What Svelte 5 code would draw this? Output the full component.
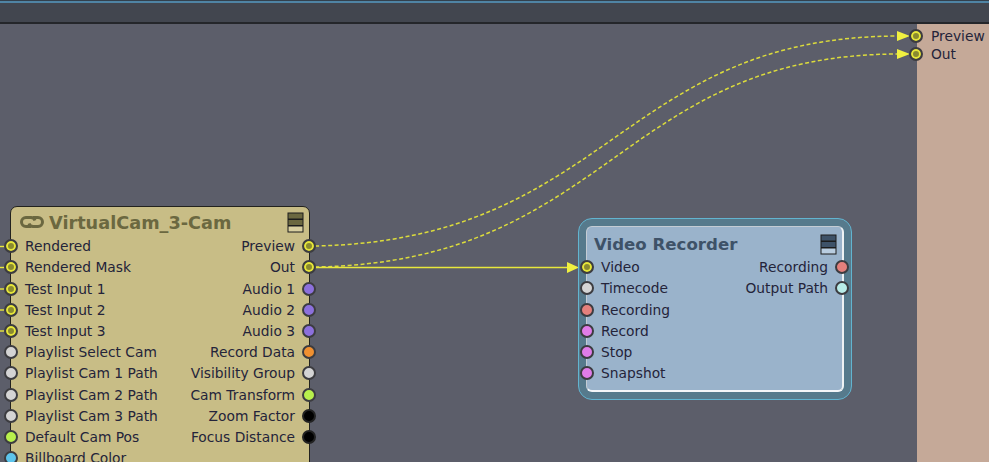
<script>
  const camLeft = [
    { name: 'Rendered', kind: 'video' },
    { name: 'Rendered Mask', kind: 'video' },
    { name: 'Test Input 1', kind: 'video' },
    { name: 'Test Input 2', kind: 'video' },
    { name: 'Test Input 3', kind: 'video' },
    { name: 'Playlist Select Cam', kind: 'grey' },
    { name: 'Playlist Cam 1 Path', kind: 'grey' },
    { name: 'Playlist Cam 2 Path', kind: 'grey' },
    { name: 'Playlist Cam 3 Path', kind: 'grey' },
    { name: 'Default Cam Pos', kind: 'lime' },
    { name: 'Billboard Color', kind: 'blue' }
  ];
  const camRight = [
    { name: 'Preview', kind: 'video' },
    { name: 'Out', kind: 'video' },
    { name: 'Audio 1', kind: 'purple' },
    { name: 'Audio 2', kind: 'purple' },
    { name: 'Audio 3', kind: 'purple' },
    { name: 'Record Data', kind: 'orange' },
    { name: 'Visibility Group', kind: 'grey' },
    { name: 'Cam Transform', kind: 'lime' },
    { name: 'Zoom Factor', kind: 'black' },
    { name: 'Focus Distance', kind: 'black' }
  ];
  const recLeft = [
    { name: 'Video', kind: 'video' },
    { name: 'Timecode', kind: 'grey' },
    { name: 'Recording', kind: 'red' },
    { name: 'Record', kind: 'pink' },
    { name: 'Stop', kind: 'pink' },
    { name: 'Snapshot', kind: 'pink' }
  ];
  const recRight = [
    { name: 'Recording', kind: 'red' },
    { name: 'Output Path', kind: 'cyan' }
  ];
  const outputs = ['Preview', 'Out'];
  // incoming wires that run off the left edge of the view
  const stubs = [246.5, 267.5, 289, 310, 331];
</script>

{#snippet stack()}
  <svg class="stack" width="17" height="21" viewBox="0 0 17 21">
    <rect x="0.5" y="0.5" width="16" height="20" fill="#1c1c1c" />
    <rect x="1.5" y="1.5" width="14" height="5" fill="currentColor" />
    <rect x="1.5" y="8" width="14" height="5" fill="currentColor" />
    <rect x="1.5" y="14.5" width="14" height="5" class="stack-light" />
  </svg>
{/snippet}

{#snippet column(rows, side)}
  <div class="col {side}">
    {#each rows as row}
      <div class="row">
        <span class="port {row.kind}"></span>
        <span class="label">{row.name}</span>
      </div>
    {/each}
  </div>
{/snippet}

<div class="app">
  <div class="topbar"></div>
  <div class="workspace">
    <div class="canvas">
      <svg class="wires" width="917" height="438" viewBox="0 24 917 438">
        <path class="dash" d="M315 246 C 610 240, 620 36, 900 36" />
        <path class="dash" d="M315 267 C 610 262, 620 54, 900 54" />
        <path class="solid" d="M315 267.5 H 570" />
        <path class="tip" d="M567 262 L579 267.5 L567 273 Z" />
        <path class="tip" d="M897 31 L910 36 L897 41 Z" />
        <path class="tip" d="M897 49 L910 54 L897 59 Z" />
        {#each stubs as y}
          <path class="solid" d="M0 {y} H 5" />
        {/each}
      </svg>

      <div class="node cam">
        <div class="head">
          <svg class="link" width="26" height="14" viewBox="0 0 26 14" fill="none">
            <path d="M12 11.5 H7 a4.5 4.5 0 0 1 0 -9 H12 a4.5 4.5 0 0 1 4 3" />
            <path d="M14 2.5 H19 a4.5 4.5 0 0 1 0 9 H14 a4.5 4.5 0 0 1 -4 -3" />
          </svg>
          <span class="title">VirtualCam_3-Cam</span>
          {@render stack()}
        </div>
        <div class="ports">
          {@render column(camLeft, 'in')}
          {@render column(camRight, 'out')}
        </div>
      </div>

      <div class="recorder">
        <div class="node rec">
          <div class="head">
            <span class="title">Video Recorder</span>
            {@render stack()}
          </div>
          <div class="ports">
            {@render column(recLeft, 'in')}
            {@render column(recRight, 'out')}
          </div>
        </div>
      </div>
    </div>

    <div class="panel">
      {#each outputs as name}
        <div class="row">
          <span class="port video"></span>
          <span class="label">{name}</span>
        </div>
      {/each}
    </div>
  </div>
</div>

<style>
  :global(body) {
    margin: 0;
    overflow: hidden;
  }

  .app {
    display: flex;
    flex-direction: column;
    width: 989px;
    height: 462px;
    overflow: hidden;
    font-family: "DejaVu Sans", sans-serif;
    font-size: 13.8px;
    color: #24243a;
  }

  .topbar {
    height: 19px;
    flex: none;
    background: #42464f;
    border-top: 1px solid #33404c;
    border-bottom: 2px solid #24262a;
    box-shadow: inset 0 2px 0 #4f84a4;
    padding-bottom: 2px;
  }

  .workspace {
    flex: 1;
    display: flex;
    min-height: 0;
  }

  .canvas {
    position: relative;
    flex: 1;
    background: #5c5e6a;
    overflow: hidden;
  }

  .wires {
    position: absolute;
    left: 0;
    top: 0;
  }

  .wires path {
    fill: none;
  }

  .wires .dash {
    stroke: #dcdc3c;
    stroke-width: 1.5;
    stroke-dasharray: 4 2.5;
  }

  .wires .solid {
    stroke: #e8e83c;
    stroke-width: 1.4;
  }

  .wires .tip {
    fill: #f0f040;
  }

  .node {
    box-sizing: border-box;
  }

  .cam {
    position: absolute;
    left: 10px;
    top: 182px;
    width: 300px;
    height: 300px;
    background: #c8bd86;
    border: 1px solid #22221e;
    border-radius: 7px;
  }

  .head {
    display: flex;
    align-items: center;
    box-sizing: border-box;
    height: 28.6px;
  }

  .cam .head {
    padding: 2px 5px 0 8px;
    color: #6b6840;
  }

  .title {
    flex: 1;
    font-weight: 700;
  }

  .cam .title {
    margin: 2px 0 0 4px;
    font-size: 17.7px;
    color: #6b6840;
  }

  .link path {
    stroke: #6b6840;
    stroke-width: 3;
  }

  .stack {
    flex: none;
  }

  .cam .stack-light {
    fill: #d8cfa0;
  }

  .rec .stack-light {
    fill: #b9cde0;
  }

  .ports {
    display: flex;
    justify-content: space-between;
  }

  .col {
    display: flex;
    flex-direction: column;
  }

  .row {
    display: flex;
    align-items: center;
    gap: 7px;
    height: 21.2px;
    white-space: nowrap;
  }

  .col.out .row {
    flex-direction: row-reverse;
  }

  .col.in .port {
    margin-left: -7px;
  }

  .col.out .port {
    margin-right: -7px;
  }

  .port {
    box-sizing: border-box;
    flex: none;
    width: 14px;
    height: 14px;
    border: 2px solid #3c3c40;
    border-radius: 50%;
  }

  .port.video {
    background: #8a8a30;
    box-shadow: inset 0 0 0 2px #e6e63a;
  }

  .port.grey { background: #d4d4d4; }
  .port.lime { background: #b8f04c; }
  .port.blue { background: #5cc4ec; }
  .port.purple { background: #8c70dc; }
  .port.orange { background: #f09030; }
  .port.black { background: #000; border-color: #222; }
  .port.red { background: #e4807c; }
  .port.pink { background: #e07ce8; }
  .port.cyan { background: #b8ece8; }

  .recorder {
    position: absolute;
    left: 578px;
    top: 194px;
    box-sizing: border-box;
    width: 274px;
    height: 182px;
    padding: 7px;
    background: #567a8c;
    border: 1px solid #62b4d0;
    border-radius: 14px;
  }

  .rec {
    height: 100%;
    background: #9ab3cb;
    border: 1px solid #c4ccd4;
    border-right: 2px solid #eef2f4;
    border-bottom: 2px solid #f4f6f8;
    border-radius: 6px;
  }

  .rec .head {
    height: 29.6px;
    padding: 6px 5px 0 7px;
    color: #3e5268;
  }

  .rec .title {
    font-size: 16.6px;
    color: #3e5268;
  }

  .panel {
    position: relative;
    flex: none;
    box-sizing: border-box;
    width: 72px;
    background: #c5a998;
    padding-top: 3px;
    line-height: 1;
  }

  .panel .row {
    height: 18px;
    gap: 8px;
  }

  .panel .port {
    margin-left: -8px;
  }

  .panel .label {
    margin-top: 2px;
  }
</style>
